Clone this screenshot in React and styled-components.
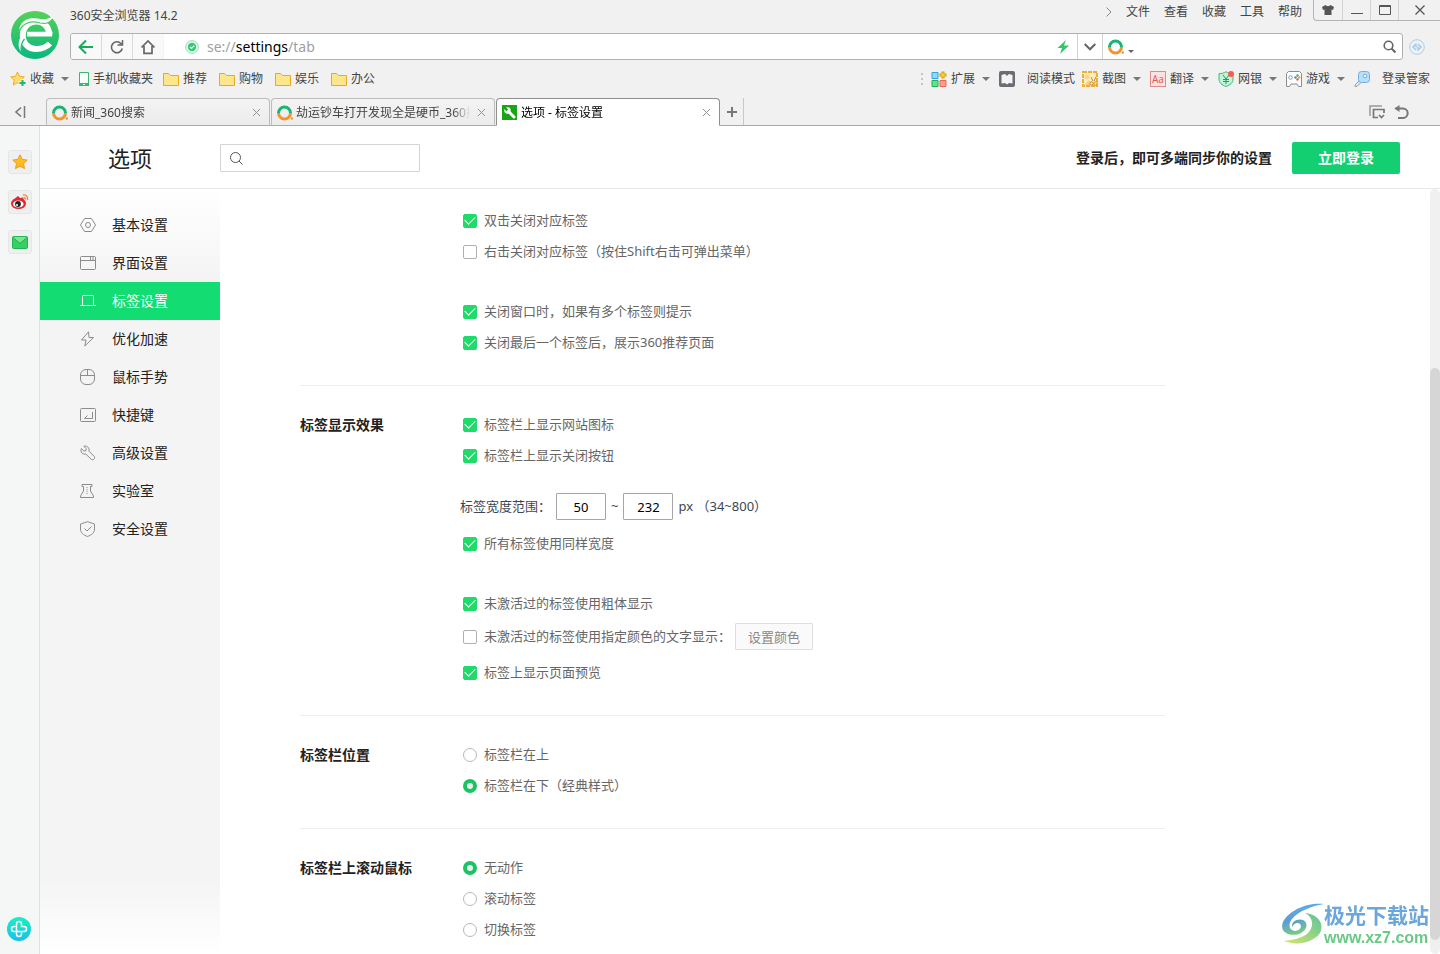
import React from 'react';
import styled, { createGlobalStyle, css } from 'styled-components';

const Global = createGlobalStyle`
  * { box-sizing: border-box; }
  body { margin: 0; background: #fff; }
  body, button, input {
    font-family: "Noto Sans", "Noto Sans CJK SC", sans-serif;
    text-spacing-trim: space-all;
  }
  button { padding: 0; border: 0; background: none; color: inherit; cursor: pointer; }
  svg { display: block; flex: none; }
`;

/* ---------- browser chrome ---------- */

const Window = styled.div`
  display: flex;
  flex-direction: column;
  height: 100vh;
  min-height: 600px;
  overflow: hidden;
  font-size: 12px;
  color: #444;
`;

const Chrome = styled.header`
  flex: none;
  background: #f1f1f1;
  border-bottom: 1px solid #aaa;
`;

const ChromeTop = styled.div`
  display: flex;
`;

const LogoBox = styled.div`
  flex: none;
  width: 70px;
  padding: 11px 0 0 11px;
`;

const ChromeRight = styled.div`
  flex: 1;
  min-width: 0;
`;

const TitleRow = styled.div`
  display: flex;
  height: 33px;
  line-height: 32px;
`;

const WindowTitle = styled.div`
  flex: 1;
`;

const MenuBar = styled.nav`
  display: flex;
  align-items: center;
  gap: 14px;
  height: 24px;
  margin-right: 11px;
`;

const MenuButton = styled.button`
  font-size: 12px;
  line-height: 20px;
`;

const WindowControls = styled.div`
  display: flex;
  height: 21px;
  border: solid #b4b4b4;
  border-width: 0 0 1px 1px;
  border-bottom-left-radius: 4px;
`;

const WindowControl = styled.button`
  display: flex;
  align-items: center;
  justify-content: center;
  width: ${(p) => (p.$wide ? 42 : 28)}px;
  & + & { border-left: 1px solid #d2d2d2; }
`;

const AddressRow = styled.div`
  display: flex;
  align-items: center;
  padding-right: 15px;
  gap: 6px;
`;

const AddressBar = styled.div`
  flex: 1;
  display: flex;
  height: 27px;
  background: #fff;
  border: 1px solid #b0b0b0;
  border-radius: 3px;
  overflow: hidden;
`;

const BarButton = styled.button`
  display: flex;
  align-items: center;
  justify-content: center;
  width: 31px;
  background: #f9f9f9;
  border-right: 1px solid #dadada;
  &:nth-of-type(3) { border-right-color: #f4f4f4; }
`;

const UrlArea = styled.div`
  flex: 1;
  display: flex;
  align-items: center;
  gap: 8px;
  padding: 0 8px 0 21px;
`;

const UrlText = styled.div`
  flex: 1;
  font-size: 14px;
  line-height: 24px;
  color: #a0a0a0;
  outline: none;
  strong { font-weight: 400; color: #000; }
`;

const BarDrop = styled.button`
  display: flex;
  align-items: center;
  justify-content: center;
  width: 26px;
  border: solid #d2d2d2;
  border-width: 0 1px;
`;

const QuickSearch = styled.div`
  display: flex;
  align-items: center;
  width: 299px;
  padding: 0 6px 0 5px;
  gap: 4px;
`;

const BareInput = styled.input`
  flex: 1;
  min-width: 0;
  border: 0;
  padding: 0;
  outline: none;
  background: transparent;
  font-size: 13px;
`;

const BookmarkRow = styled.div`
  display: flex;
  align-items: center;
  justify-content: space-between;
  height: 38px;
  padding: 0 10px;
`;

const BookmarkGroup = styled.div`
  display: flex;
  align-items: center;
  gap: ${(p) => (p.$tight ? 7 : 10)}px;
`;

const Bookmark = styled.button`
  display: flex;
  align-items: center;
  gap: ${(p) => (p.$spaced ? 12 : 4)}px;
  padding-right: ${(p) => (p.$folder ? 2 : 0)}px;
  font-size: 12px;
  line-height: 20px;
  white-space: nowrap;
`;

const CaretSlot = styled.span`
  padding: 0 ${(p) => (p.$end ? 2 : 0)}px 0 3px;
`;

const TabRow = styled.div`
  display: flex;
  align-items: flex-end;
  height: 28px;
  margin-bottom: -1px;
`;

const TabCollapse = styled.button`
  width: 46px;
  height: 28px;
  padding-left: 14px;
`;

const Tab = styled.div`
  display: flex;
  align-items: center;
  gap: 3px;
  width: 224px;
  height: 28px;
  margin-right: 1px;
  padding: 2px 8px 0 5px;
  border: 1px solid ${(p) => (p.$active ? '#8f8f8f' : '#bcbcbc')};
  border-bottom-color: ${(p) => (p.$active ? '#fff' : '#aaa')};
  border-radius: 4px 4px 0 0;
  background: ${(p) => (p.$active ? '#fff' : 'linear-gradient(#f3f3f3, #ececec)')};
  color: ${(p) => (p.$active ? '#000' : '#444')};
`;

const TabTitle = styled.div`
  flex: 1;
  overflow: hidden;
  white-space: nowrap;
  line-height: 22px;
  mask-image: linear-gradient(to right, #000 88%, transparent 98%);
`;

const TabClose = styled.button`
  padding-bottom: 2px;
`;

const NewTab = styled.button`
  display: flex;
  align-items: center;
  justify-content: center;
  width: 23px;
  height: 27px;
  border-right: 1px solid #c8c8c8;
  margin-bottom: 1px;
`;

const TabTools = styled.div`
  display: flex;
  align-items: center;
  gap: 9px;
  height: 28px;
  margin-left: auto;
  padding-right: 31px;
`;

/* ---------- page ---------- */

const Body = styled.div`
  flex: 1;
  min-height: 0;
  display: flex;
`;

const SideStrip = styled.aside`
  flex: none;
  display: flex;
  flex-direction: column;
  align-items: center;
  gap: 16px;
  width: 40px;
  padding: 24px 0 13px;
  background: #f5f6f6;
  border-right: 1px solid #e0e0e0;
`;

const StripButton = styled.button`
  display: flex;
  align-items: center;
  justify-content: center;
  width: 24px;
  height: 24px;
  border: 1px solid #e6e6e6;
  border-radius: 3px;
  background: #efefef;
`;

const StripRound = styled.button`
  margin: auto 2px 0 0;
`;

const Page = styled.main`
  flex: 1;
  min-width: 0;
  display: flex;
  flex-direction: column;
  background: #fff;
`;

const PageHeader = styled.div`
  flex: none;
  display: flex;
  align-items: center;
  height: 63px;
  padding: 2px 40px 0 0;
  border-bottom: 1px solid #e8e8e8;
`;

const PageTitle = styled.h1`
  width: 180px;
  margin: 0;
  text-align: center;
  font-size: 22px;
  font-weight: 400;
  line-height: 32px;
  color: #222;
`;

const SearchBox = styled.label`
  display: flex;
  align-items: center;
  gap: 8px;
  width: 200px;
  height: 28px;
  padding: 0 8px;
  border: 1px solid #d4d4d4;
  border-radius: 1px;
`;

const LoginHint = styled.p`
  margin: 0 20px 0 auto;
  padding-bottom: 2px;
  font-size: 14px;
  font-weight: 700;
  color: #222;
`;

const LoginButton = styled.button`
  width: 108px;
  height: 32px;
  padding-bottom: 2px;
  border-radius: 2px;
  background: #13cf72;
  color: #fff;
  font-size: 14px;
  font-weight: 700;
`;

const PageBody = styled.div`
  flex: 1;
  min-height: 0;
  display: flex;
`;

const Sidebar = styled.nav`
  flex: none;
  width: 180px;
  padding-top: 17px;
  background: linear-gradient(#fff, #f4f4f4 92px, #f4f4f4 calc(100% - 76px), #fff);
`;

const NavLink = styled.a`
  display: flex;
  align-items: center;
  gap: 16px;
  height: 38px;
  padding-left: 40px;
  font-size: 14px;
  text-decoration: none;
  color: #222;
  svg { color: #8c8c8c; }
  ${(p) => p.$active && css`
    background: #12dc72;
    color: #fff;
    svg { color: #fff; }
  `}
`;

const Label = styled.span`
  padding-bottom: 2px;
`;

const Content = styled.div`
  flex: 1;
  min-width: 0;
  overflow: hidden;
  padding: 16px 80px 0;
`;

const Section = styled.section`
  display: grid;
  grid-template-columns: 160px 1fr;
  max-width: 865px;
  padding-bottom: 27px;
  & + & {
    border-top: 1px solid #ededed;
    padding-top: 23px;
  }
`;

const SectionTitle = styled.h2`
  margin: 0;
  font-size: 14px;
  font-weight: 700;
  line-height: 31px;
  color: #222;
  white-space: nowrap;
`;

const Group = styled.div`
  & + & { margin-top: 29px; }
`;

const Option = styled.label`
  display: flex;
  align-items: center;
  gap: 7px;
  height: ${(p) => (p.$short ? 27 : 31)}px;
  padding-left: 3px;
  font-size: 13px;
  color: #666;
  white-space: nowrap;
`;

const Check = styled.input`
  appearance: none;
  display: grid;
  place-items: center;
  width: 14px;
  height: 14px;
  margin: 0;
  border: 1px solid #b0b0b0;
  border-radius: 2px;
  background: #fff;
  &:checked { border-color: #1edb6a; background: #1edb6a; }
  &:checked::after {
    content: "";
    width: 9px;
    height: 5px;
    margin-bottom: 3px;
    border: solid #fff;
    border-width: 0 0 1px 1px;
    transform: rotate(-45deg);
  }
`;

const Radio = styled.input`
  appearance: none;
  width: 14px;
  height: 14px;
  margin: 0;
  border: 1px solid #b8b8b8;
  border-radius: 50%;
  background: #fff;
  &:checked { border: 4px solid #1cc363; background: #eee; }
`;

const WidthRow = styled.div`
  display: flex;
  align-items: center;
  gap: 5px;
  height: 27px;
  margin: 22px 0 8px;
  font-size: 13px;
  color: #3c4654;
  white-space: nowrap;
`;

const WidthLabel = styled.label`
  padding-bottom: 2px;
`;

const NumberInput = styled.input`
  width: 50px;
  height: 27px;
  padding: 0;
  border: 1px solid #a6a6a6;
  border-radius: 1px;
  text-align: center;
  font-size: 13px;
  color: #000;
`;

const ColorRow = styled.div`
  display: flex;
  align-items: center;
  gap: 4px;
  padding: 4px 0 7px;
`;

const ColorButton = styled.button`
  width: 78px;
  height: 27px;
  border: 1px solid #dedede;
  border-radius: 1px;
  background: #fafafa;
  font-size: 13px;
  color: #888;
`;

const ScrollTrack = styled.div`
  flex: none;
  width: 10px;
  padding: 179px 0 14px;
  border-radius: 5px;
  background: #f0f0f0;
`;

const ScrollThumb = styled.div`
  height: 100%;
  border-radius: 5px;
  background: #d6d6d6;
`;

const Watermark = styled.div`
  position: fixed;
  right: 11px;
  bottom: 7px;
  display: flex;
  align-items: center;
`;

const WatermarkName = styled.div`
  font-family: "Noto Sans CJK SC", sans-serif;
  font-size: 21px;
  font-weight: 700;
  line-height: 30px;
  color: #6ba6dd;
`;

const WatermarkSite = styled.div`
  font-family: "Liberation Sans", sans-serif;
  font-size: 16px;
  font-weight: 700;
  line-height: 18px;
  color: #69c985;
`;

/* ---------- icons ---------- */

const Icon = ({ w = 16, h = 16, sw = 1, children, ...rest }) => (
  <svg width={w} height={h} viewBox={`0 0 ${w} ${h}`} fill="none" stroke="currentColor" strokeWidth={sw} aria-hidden="true" {...rest}>
    {children}
  </svg>
);

const Caret = ({ end }) => (
  <CaretSlot $end={end}>
    <Icon w={8} h={4}><path d="M0 0h8L4 4z" fill="#777" stroke="none" /></Icon>
  </CaretSlot>
);

const BrowserLogo = () => (
  <Icon w={48} h={48}>
    <defs>
      <linearGradient id="logo" x1="0" y1="0" x2="0" y2="1">
        <stop offset="0" stopColor="#55d157" />
        <stop offset="1" stopColor="#08b781" />
      </linearGradient>
    </defs>
    <circle cx="24" cy="24" r="24" fill="url(#logo)" stroke="none" />
    <path d="M16 20.800H41.500V21.500C41.500 23 41.300 24 41 25.500H16z" fill="#fff" stroke="none" />
    <path d="M38.200 22.500C37.500 15 32 10.500 25.500 10.500C17.500 10.500 11.800 16.500 11.800 24.500C11.800 32.500 17.500 38 25.500 38C31 38 35.500 36 39 32.500" stroke="#fff" strokeWidth="6" />
    <path d="M8 20C8.500 11 16 6 24 7.500C31 9 36 8.500 41.500 5.500C42 9 38.500 11.500 34 11.500C27 11.500 14 9 8 20Z" fill="#fff" stroke="none" />
    <path d="M7.500 21C12 11 21 9.500 29 12C34 13.200 38.500 12 41.500 8" stroke="#49cc5e" strokeWidth="1.200" />
    <path d="M10.500 24C7 30 6.500 36 10 40.500C10 36 11 33 13 30Z" fill="#fff" stroke="none" />
    <path d="M10.300 40C9.500 35 11 31 13.500 28" stroke="#17bd77" strokeWidth="1.200" />
  </Icon>
);

const Ring = () => (
  <Icon w={16} h={16} sw={3}>
    <path d="M1.500 8a6 6 0 0 1 12 0" stroke="#16b573" />
    <path d="M1.500 8a6 6 0 0 0 12 0" stroke="#f59331" />
    <circle cx="14.800" cy="13.500" r="1.200" fill="#f59331" stroke="none" />
  </Icon>
);

const Folder = () => (
  <Icon w={16} h={16}>
    <path d="M.5 2.500h5l2 2h8v10H.5z" fill="#ffe58c" stroke="#e9aa1e" />
  </Icon>
);

const FavStar = () => (
  <Icon>
    <path d="M7.500 1l2 4.300 4.800.6-3.500 3.300.9 4.800-4.200-2.300L3.300 14l.8-4.800L.7 5.900l4.800-.6z" fill="#ffdc6e" stroke="#eeae2b" />
    <path d="M12.500 8v8M8.500 12h8" stroke="#f1f1f1" strokeWidth="4" />
    <path d="M12.500 9v6M9.500 12h6" stroke="#22b768" strokeWidth="2" />
  </Icon>
);

const Phone = () => (
  <Icon w={10} h={16}>
    <path d="M.5 1.500h9v13h-9z" fill="#f6fffa" stroke="#3db671" />
    <path d="M0 12h10v3H0z" fill="#3db671" stroke="none" />
    <path d="M4 13.500h2" stroke="#fff" />
  </Icon>
);

const Dots = () => (
  <Icon w={4} h={16}><path d="M2 2v2M2 7v2M2 12v2" stroke="#c4c4c4" strokeWidth="2" /></Icon>
);

const ExtIcon = () => (
  <Icon>
    <path d="M1 1.500h6v6H1z" fill="#8fd8fa" stroke="#35a5dc" />
    <path d="M1 9.500h6v6H1z" fill="#67e191" stroke="#20b157" />
    <path d="M9 9.500h6v6H9z" fill="#ffa28f" stroke="#ec6753" />
    <path d="M12 .500v7M8.500 4h7" stroke="#d99b07" strokeWidth="3" />
    <path d="M12 1.500v5M9.500 4h5" stroke="#ffe14b" />
  </Icon>
);

const ReadIcon = () => (
  <Icon>
    <rect width="16" height="16" rx="2" fill="#6a6d73" stroke="none" />
    <path d="M2.500 4L6 3l2 1.500L10 3l3.500 1v8.500L10 12l-2 1.500L6 12l-3.500.5z" fill="#f4f4f4" stroke="none" />
    <path d="M6.500 2.500L8 5l1.500-2.500z" fill="#6a6d73" stroke="none" />
  </Icon>
);

const ShotIcon = () => (
  <Icon>
    <path d="M1 1h14v14H1z" fill="#ffeebb" stroke="#edaf38" strokeWidth="2" strokeDasharray="4 1" />
    <circle cx="5" cy="6" r="2.500" fill="#f8d590" stroke="none" />
    <path d="M2 14l5-5 4 5z" fill="#f7d086" stroke="none" />
    <path d="M9 6l2 4M14 6l-2 4" stroke="#a58a62" />
    <circle cx="9.500" cy="12.500" r="1.700" fill="#ffe39c" stroke="#d48f20" />
    <circle cx="13.500" cy="12.500" r="1.700" fill="#ffe39c" stroke="#d48f20" />
  </Icon>
);

const TranslateIcon = () => (
  <Icon>
    <rect x=".5" y=".5" width="15" height="15" fill="#fbe1df" stroke="#dc8d8a" />
    <text x="8" y="12" textAnchor="middle" fontSize="10" fontFamily="Open Sans, sans-serif" fill="#d85a56" stroke="none">Aa</text>
  </Icon>
);

const BankIcon = () => (
  <Icon>
    <path d="M8 .7c2 1.500 4 1.800 7 2V8c0 4-3 6-7 7.500C4 14 1 12 1 8V2.700c3-.2 5-.5 7-2z" fill="#c3f4d8" stroke="#3eb878" />
    <path d="M5 4l3 4 3-4M8 8v5M5 8.500h6M5 10.500h6" stroke="#1d9f5d" />
    <circle cx="13" cy="3" r="3" fill="#ff5a50" stroke="none" />
  </Icon>
);

const GameIcon = () => (
  <Icon>
    <path d="M2.500 .5h11l2 2v13h-3L11 13H5l-1.500 2.500h-3v-13z" fill="#fff" stroke="#8a8d94" />
    <circle cx="4.500" cy="6.500" r="1.800" stroke="#999" />
    <circle cx="11.500" cy="4.500" r="1.200" fill="#2cb76d" stroke="none" />
    <circle cx="9.500" cy="6.500" r="1.200" fill="#2d8fe0" stroke="none" />
    <circle cx="13.300" cy="6.500" r="1.200" fill="#f4a42c" stroke="none" />
    <circle cx="11.500" cy="8.500" r="1.200" fill="#ef5350" stroke="none" />
  </Icon>
);

const KeyIcon = () => (
  <Icon>
    <path d="M5 10l-4 4v1.500h2l4-4" fill="#e8e8e8" stroke="#9a9a9a" />
    <rect x="4.500" y=".5" width="11" height="11" rx="3" fill="#b9defa" stroke="#6fafe0" />
    <circle cx="11" cy="5" r="1.800" fill="#f1f9ff" stroke="#6fafe0" />
  </Icon>
);

const Close = () => (
  <Icon w={9} h={9}><path d="M1 1l7 7M8 1L1 8" stroke="#929292" /></Icon>
);

const SettingsFavicon = () => (
  <Icon>
    <rect width="15" height="15" fill="#1ba415" stroke="none" />
    <path d="M6 6l6 6" stroke="#fff" strokeWidth="3" strokeLinecap="round" />
    <circle cx="5.500" cy="5.500" r="3.200" fill="#fff" stroke="none" />
    <path d="M2 2l3.300 3.300" stroke="#1ba415" strokeWidth="2.400" />
  </Icon>
);

const SyncBadge = () => (
  <Icon w={16} h={16}>
    <circle cx="8" cy="8" r="7.300" stroke="#a5cff1" />
    <path d="M7.500 4.500L4 8l3 3M8.500 11.500L12 8 9 5M6.500 8L8 6.500M8 9.500L9.500 8" stroke="#9ecbf2" strokeWidth="1.500" />
  </Icon>
);

const UrlShield = () => (
  <Icon w={14} h={14}>
    <circle cx="7" cy="7" r="6.300" fill="#e6f9ee" stroke="#8bdcae" />
    <circle cx="7" cy="7" r="4.200" fill="#39c678" stroke="none" />
    <path d="M5 7l1.500 1.500L9.300 5.700" stroke="#fff" strokeWidth="1.200" />
  </Icon>
);

const navIcons = {
  basic: <><path d="M4.500 1.500h7l4 6.500-4 6.500h-7L.5 8z" strokeLinejoin="round" /><circle cx="8" cy="8" r="2.500" /></>,
  ui: <><rect x=".5" y="1.500" width="15" height="13" rx="1" /><path d="M1 5.500h14M10.500 2v3M13 2v3" /></>,
  tab: <path d="M0 12.500h16M2.500 12.500v-9a1 1 0 0 1 1-1h9a1 1 0 0 1 1 1v9" />,
  speed: <path d="M8.500 .8L1.500 9H6l-1.200 6L13.500 6.500H9z" strokeLinejoin="round" />,
  mouse: <><rect x=".5" y=".5" width="14" height="15" rx="5.500" /><path d="M.5 6.500h14M7.500 .5v6" /></>,
  keys: <><rect x=".5" y="1.500" width="15" height="13" rx="1" /><path d="M12.500 5v6.500h-8l3-3" /></>,
  tools: <path d="M3.800 1.300l2.400 2.400-.3 2-2 .3L1.300 3.600C.3 6 1.500 8.700 4 9.200l1.800-.2 5.500 5.500c2 1 4.200-1 3-3L9 6.200C9.800 2.500 6.500.2 3.800 1.300z" strokeLinejoin="round" />,
  lab: <><path d="M2 1.500h10v2h-1.500V8l3 5v1.500H.5V13l3-5V3.500H2z" /><path d="M7 4v7" strokeDasharray="1 1" /></>,
  safe: <><path d="M7.500 .7L14.500 3v5c0 4-3 6-7 7.500C3.500 14 .5 12 .5 8V3z" strokeLinejoin="round" /><path d="M4.500 7.500l2.500 2.500 4.500-4.500" /></>,
};

/* ---------- data ---------- */

const menus = ['文件', '查看', '收藏', '工具', '帮助'];
const folders = ['推荐', '购物', '娱乐', '办公'];
const navItems = [
  ['basic', '基本设置'], ['ui', '界面设置'], ['tab', '标签设置'],
  ['speed', '优化加速'], ['mouse', '鼠标手势'], ['keys', '快捷键'],
  ['tools', '高级设置'], ['lab', '实验室'], ['safe', '安全设置'],
];

const CheckOption = ({ on, short, children }) => (
  <Option $short={short}><Check type="checkbox" defaultChecked={on} /><Label>{children}</Label></Option>
);

const RadioOption = ({ name, on, children }) => (
  <Option><Radio type="radio" name={name} defaultChecked={on} /><Label>{children}</Label></Option>
);

const BrowserTab = ({ icon, title, active }) => (
  <Tab role="tab" aria-selected={!!active} $active={active}>
    {icon}
    <TabTitle>{title}</TabTitle>
    <TabClose aria-label="关闭标签"><Close /></TabClose>
  </Tab>
);

const BrowserChrome = () => (
  <Chrome>
    <ChromeTop>
      <LogoBox><BrowserLogo /></LogoBox>
      <ChromeRight>
        <TitleRow>
          <WindowTitle>360安全浏览器 14.2</WindowTitle>
          <MenuBar>
            <Icon w={6} h={10} stroke="#888"><path d="M.5 .5L5 5 .5 9.500" /></Icon>
            {menus.map((m) => <MenuButton key={m}>{m}</MenuButton>)}
          </MenuBar>
          <WindowControls>
            <WindowControl aria-label="皮肤">
              <Icon w={12} h={10}><path d="M3.500 0c1 1.500 4 1.500 5 0L12 2l-1 3-1.500-.5V10h-7V4.500L1 5 0 2z" fill="#555" stroke="none" /></Icon>
            </WindowControl>
            <WindowControl aria-label="最小化">
              <Icon w={12} h={10}><path d="M0 8.500h12" stroke="#555" /></Icon>
            </WindowControl>
            <WindowControl aria-label="最大化">
              <Icon w={12} h={10}><path d="M.5 .5h11v9H.5zM0 1.500h12" stroke="#555" /></Icon>
            </WindowControl>
            <WindowControl aria-label="关闭" $wide>
              <Icon w={10} h={10}><path d="M.5 .5l9 9M9.500 .5l-9 9" stroke="#555" strokeWidth="1.300" /></Icon>
            </WindowControl>
          </WindowControls>
        </TitleRow>
        <AddressRow>
          <AddressBar>
            <BarButton aria-label="后退">
              <Icon sw={2} stroke="#12ae55"><path d="M1.500 8H15M8 1.500L1.500 8 8 14.500" /></Icon>
            </BarButton>
            <BarButton aria-label="刷新">
              <Icon stroke="#666"><path d="M13.300 9.500A5.500 5.500 0 1 1 12 4.500l1 1.200" strokeWidth="1.600" /><path d="M13.500 1v5H8.500" strokeWidth="1.500" /></Icon>
            </BarButton>
            <BarButton aria-label="主页">
              <Icon stroke="#666"><path d="M1.500 8.500L8 2l6.500 6.500M4 7v7.300h8V7" strokeWidth="1.700" /></Icon>
            </BarButton>
            <UrlArea>
              <UrlShield />
              <UrlText role="textbox" aria-label="地址" contentEditable suppressContentEditableWarning spellCheck={false}>
                se://<strong>settings</strong>/tab
              </UrlText>
              <Icon w={12} h={14}><path d="M9 0L.5 8H5L3 14l9-8.500H7z" fill="#2fc968" stroke="none" /></Icon>
            </UrlArea>
            <BarDrop aria-label="历史地址">
              <Icon w={12} h={8} sw={2} stroke="#666"><path d="M.7 1L6 6.300 11.300 1" /></Icon>
            </BarDrop>
            <QuickSearch>
              <Ring />
              <Icon w={6} h={16}><path d="M0 11h6l-3 3z" fill="#666" stroke="none" /></Icon>
              <BareInput aria-label="搜索" />
              <Icon w={13} h={13} sw={2} stroke="#666"><circle cx="5.500" cy="5.500" r="4.300" strokeWidth="1.600" /><path d="M8.500 8.500l4 4" /></Icon>
            </QuickSearch>
          </AddressBar>
          <SyncBadge />
        </AddressRow>
      </ChromeRight>
    </ChromeTop>

    <BookmarkRow>
      <BookmarkGroup>
        <Bookmark><FavStar />收藏<Caret /></Bookmark>
        <Bookmark><Phone />手机收藏夹</Bookmark>
        {folders.map((f) => <Bookmark key={f} $folder><Folder />{f}</Bookmark>)}
      </BookmarkGroup>
      <BookmarkGroup $tight>
        <Dots />
        <Bookmark><ExtIcon />扩展<Caret end /></Bookmark>
        <Bookmark $spaced><ReadIcon />阅读模式</Bookmark>
        <Bookmark><ShotIcon />截图<Caret end /></Bookmark>
        <Bookmark><TranslateIcon />翻译<Caret end /></Bookmark>
        <Bookmark><BankIcon />网银<Caret end /></Bookmark>
        <Bookmark><GameIcon />游戏<Caret end /></Bookmark>
        <Bookmark $spaced><KeyIcon />登录管家</Bookmark>
      </BookmarkGroup>
    </BookmarkRow>

    <TabRow>
      <TabCollapse aria-label="收起">
        <Icon w={12} h={14} sw={2} stroke="#777"><path d="M7 2.500L2 7 7 11.500" strokeWidth="1.600" /><path d="M10.500 1v12" strokeWidth="1.500" /></Icon>
      </TabCollapse>
      <BrowserTab icon={<Ring />} title="新闻_360搜索" />
      <BrowserTab icon={<Ring />} title="劫运钞车打开发现全是硬币_360搜索" />
      <BrowserTab icon={<SettingsFavicon />} title="选项 - 标签设置" active />
      <NewTab aria-label="新标签">
        <Icon w={10} h={10} sw={2} stroke="#777"><path d="M5 0v10M0 5h10" /></Icon>
      </NewTab>
      <TabTools>
        <button aria-label="标签列表">
          <Icon w={16} h={14} sw={2} stroke="#777">
            <path d="M1 11V1h12" strokeWidth="1.500" stroke="#999" />
            <path d="M9 12.500H4.500v-8h10.500V8" strokeWidth="1.700" />
            <path d="M10 10l2.500 2.500L15 10" strokeWidth="1.700" />
          </Icon>
        </button>
        <button aria-label="恢复标签">
          <Icon w={15} h={14} sw={2} stroke="#777"><path d="M1.500 3.500H9a4.700 4.700 0 0 1 0 9.400H4" /><path d="M5.500 0v7L.5 3.500z" fill="#777" stroke="none" /></Icon>
        </button>
      </TabTools>
    </TabRow>
  </Chrome>
);

export default function App() {
  return (
    <>
      <Global />
      <Window>
        <BrowserChrome />
        <Body>
          <SideStrip>
            <StripButton aria-label="收藏夹">
              <Icon><path d="M8 .8l2.200 4.600 5 .7-3.700 3.500 1 5L8 12.200l-4.500 2.400 1-5L.8 6.100l5-.7z" fill="#ffbd22" stroke="#f39a1d" /></Icon>
            </StripButton>
            <StripButton aria-label="微博">
              <Icon w={18} h={16}>
                <ellipse cx="7.500" cy="9.500" rx="7.500" ry="5.500" fill="#e02731" stroke="none" />
                <path d="M2 6l5-4 2 2 3-.5 1 3z" fill="#e02731" stroke="none" />
                <ellipse cx="7.300" cy="10" rx="5.300" ry="3.600" fill="#fff" stroke="none" />
                <circle cx="7" cy="10" r="2.900" fill="#222" stroke="none" />
                <circle cx="6" cy="11" r="1" fill="#fff" stroke="none" />
                <path d="M12 1c3-.5 5 1.500 4.500 5M12.500 3.500c1.500 0 2 .8 1.800 2" stroke="#f3912a" strokeWidth="1.400" />
              </Icon>
            </StripButton>
            <StripButton aria-label="邮箱">
              <Icon w={16} h={13}>
                <rect x=".5" y=".5" width="15" height="12" rx="1" fill="#36cf66" stroke="#1fb553" />
                <path d="M1 1h14L8 7z" fill="#7ee58e" stroke="none" />
                <path d="M1 1.500L8 7.500l7-6" stroke="#1fb553" />
              </Icon>
            </StripButton>
            <StripRound aria-label="健康">
              <Icon w={24} h={24}>
                <defs>
                  <linearGradient id="plus" x1="0" y1="0" x2="0" y2="1">
                    <stop offset="0" stopColor="#18f0c2" />
                    <stop offset="1" stopColor="#1bbfe8" />
                  </linearGradient>
                </defs>
                <circle cx="12" cy="12" r="12" fill="url(#plus)" stroke="none" />
                <path d="M9.500 14.500V7a2.500 2.500 0 0 1 5 0v2.500H17a2.500 2.500 0 0 1 0 5H7a2.500 2.500 0 0 1 0-5h1M9.500 14.500V17a2.500 2.500 0 0 0 5 0v-1" stroke="#fff" strokeWidth="1.500" strokeLinecap="round" />
              </Icon>
            </StripRound>
          </SideStrip>

          <Page>
            <PageHeader>
              <PageTitle>选项</PageTitle>
              <SearchBox>
                <Icon w={14} h={14} stroke="#555"><circle cx="6.500" cy="6.500" r="5" /><path d="M10 10l3.500 3.500" /></Icon>
                <BareInput aria-label="搜索设置" />
              </SearchBox>
              <LoginHint>登录后，即可多端同步你的设置</LoginHint>
              <LoginButton>立即登录</LoginButton>
            </PageHeader>

            <PageBody>
              <Sidebar>
                {navItems.map(([id, label]) => (
                  <NavLink key={id} href={`#${id}`} $active={id === 'tab'}>
                    <Icon>{navIcons[id]}</Icon><Label>{label}</Label>
                  </NavLink>
                ))}
              </Sidebar>

              <Content>
                <Section>
                  <div />
                  <div>
                    <Group>
                      <CheckOption on>双击关闭对应标签</CheckOption>
                      <CheckOption>右击关闭对应标签（按住Shift右击可弹出菜单）</CheckOption>
                    </Group>
                    <Group>
                      <CheckOption on>关闭窗口时，如果有多个标签则提示</CheckOption>
                      <CheckOption on>关闭最后一个标签后，展示360推荐页面</CheckOption>
                    </Group>
                  </div>
                </Section>

                <Section>
                  <SectionTitle>标签显示效果</SectionTitle>
                  <div>
                    <Group>
                      <CheckOption on>标签栏上显示网站图标</CheckOption>
                      <CheckOption on>标签栏上显示关闭按钮</CheckOption>
                      <WidthRow>
                        <WidthLabel htmlFor="min-width">标签宽度范围：</WidthLabel>
                        <NumberInput id="min-width" defaultValue="50" />
                        <Label>~</Label>
                        <NumberInput aria-label="最大宽度" defaultValue="232" />
                        <Label>px （34~800）</Label>
                      </WidthRow>
                      <CheckOption on>所有标签使用同样宽度</CheckOption>
                    </Group>
                    <Group>
                      <CheckOption on>未激活过的标签使用粗体显示</CheckOption>
                      <ColorRow>
                        <CheckOption short>未激活过的标签使用指定颜色的文字显示：</CheckOption>
                        <ColorButton>设置颜色</ColorButton>
                      </ColorRow>
                      <CheckOption on>标签上显示页面预览</CheckOption>
                    </Group>
                  </div>
                </Section>

                <Section>
                  <SectionTitle>标签栏位置</SectionTitle>
                  <div>
                    <RadioOption name="position">标签栏在上</RadioOption>
                    <RadioOption name="position" on>标签栏在下（经典样式）</RadioOption>
                  </div>
                </Section>

                <Section>
                  <SectionTitle>标签栏上滚动鼠标</SectionTitle>
                  <div>
                    <RadioOption name="wheel" on>无动作</RadioOption>
                    <RadioOption name="wheel">滚动标签</RadioOption>
                    <RadioOption name="wheel">切换标签</RadioOption>
                  </div>
                </Section>
              </Content>

              <ScrollTrack><ScrollThumb /></ScrollTrack>
            </PageBody>
          </Page>
        </Body>
      </Window>

      <Watermark>
        <Icon w={43} h={42}>
          <defs>
            <linearGradient id="swirl" x1="0" y1="0" x2="0.300" y2="1">
              <stop offset="0" stopColor="#5fb4ee" />
              <stop offset="0.550" stopColor="#5c9bd8" />
              <stop offset="1" stopColor="#79cf7b" />
            </linearGradient>
            <linearGradient id="leaf" x1="1" y1="0" x2="0" y2="1">
              <stop offset="0" stopColor="#5bc2a0" />
              <stop offset="1" stopColor="#d5e66a" />
            </linearGradient>
          </defs>
          <path d="M43 2C27 0 8 8 2 20C-2 30 8 35 18 32C26 29 28 21 22 18C16 16 10 20 11 25C14 20 19 20 20 24C20 29 12 31 9 26C6 17 20 6 43 2Z" fill="url(#swirl)" stroke="none" />
          <path d="M24 11C32 15 34 25 26 32C20 36 12 38 3 39C15 44 32 41 39 31C44 21 36 12 24 11Z" fill="url(#leaf)" stroke="none" />
        </Icon>
        <div>
          <WatermarkName>极光下载站</WatermarkName>
          <WatermarkSite>www.xz7.com</WatermarkSite>
        </div>
      </Watermark>
    </>
  );
}
